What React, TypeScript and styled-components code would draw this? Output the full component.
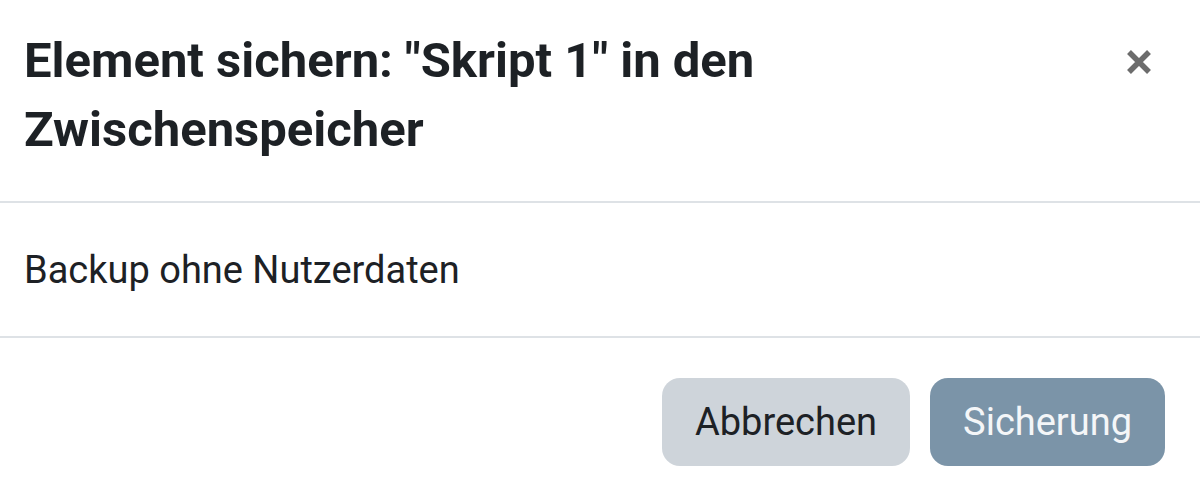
import React from 'react';
import styled, { createGlobalStyle } from 'styled-components';

const GlobalStyle = createGlobalStyle`
  html, body {
    margin: 0;
    padding: 0;
    background: #fff;
  }
  body {
    font-family: Roboto, "Liberation Sans", Arial, sans-serif;
    color: #1d2125;
  }
`;

const Modal = styled.div`
  width: 1200px;
  height: 501px;
  background: #fff;
  display: flex;
  flex-direction: column;
`;

const Header = styled.div`
  display: flex;
  align-items: flex-start;
  justify-content: space-between;
  padding: 26px 44px 0 24px;
  height: 203px;
  box-sizing: border-box;
  border-bottom: 2px solid #dee2e6;
`;

const Title = styled.h5`
  margin: 0;
  font-size: 49px;
  font-weight: 700;
  line-height: 69px;
  color: #1d2125;
  max-width: 800px;
`;

const CloseButton = styled.button`
  border: 0;
  background: transparent;
  padding: 0;
  margin-top: 19px;
  width: 34px;
  height: 34px;
  display: flex;
  align-items: center;
  justify-content: center;
  color: #6c6c6c;
  cursor: pointer;
`;

const Body = styled.div`
  height: 135px;
  box-sizing: border-box;
  padding: 0 24px;
  display: flex;
  align-items: center;
  font-size: 38px;
  border-bottom: 2px solid #dee2e6;
`;

const Footer = styled.div`
  flex: 1;
  display: flex;
  justify-content: flex-end;
  align-items: flex-start;
  gap: 20px;
  padding: 40px 35px 0 0;
`;

const Button = styled.button<{ $primary?: boolean }>`
  height: 88px;
  padding: 0 33px;
  border: 0;
  border-radius: 18px;
  font-family: inherit;
  font-size: 38px;
  background: ${p => (p.$primary ? '#7b94a8' : '#ced4da')};
  color: ${p => (p.$primary ? '#f4f6f8' : '#1d2125')};
  cursor: pointer;
`;

const CloseIcon = () => (
  <svg width="28" height="28" viewBox="0 0 28 28">
    <path d="M4 4 L24 24 M24 4 L4 24" stroke="currentColor" strokeWidth="5.5" strokeLinecap="butt" />
  </svg>
);

export default function App() {
  return (
    <>
      <GlobalStyle />
      <Modal>
        <Header>
          <Title>Element sichern: "Skript 1" in den Zwischenspeicher</Title>
          <CloseButton aria-label="Schließen">
            <CloseIcon />
          </CloseButton>
        </Header>
        <Body>Backup ohne Nutzerdaten</Body>
        <Footer>
          <Button>Abbrechen</Button>
          <Button $primary>Sicherung</Button>
        </Footer>
      </Modal>
    </>
  );
}
